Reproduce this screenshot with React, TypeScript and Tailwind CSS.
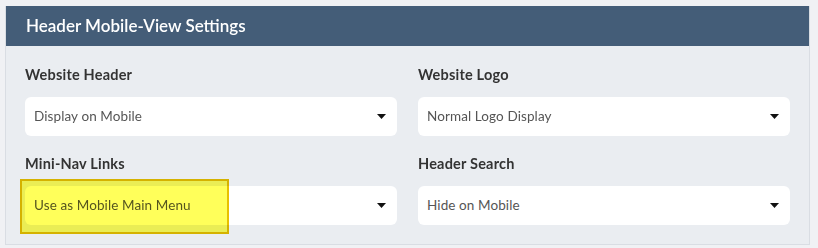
import React from "react";

const Caret = () => (
    <svg width="9" height="5" viewBox="0 0 9 5" className="shrink-0">
        <path d="M0 0 L9 0 L4.5 5 Z" fill="#111" />
    </svg>
);

function Field({ label, value, highlight }: { label: string; value: string; highlight?: boolean }) {
    return (
        <div className="flex flex-col">
            <div className="h-[20px] text-[14.5px] font-bold leading-[20px] tracking-[0.2px] text-[#333]">{label}</div>
            <div className="relative mt-[12px]">
                <div className="flex h-[39px] items-center justify-between rounded-[6px] bg-white pl-[9px] pr-[11px] text-[13.5px] tracking-[0.1px] text-[#555]">
                    <span>{value}</span>
                    <Caret />
                </div>
                {highlight && (
                    <div className="pointer-events-none absolute left-[-5px] top-[-7px] h-[55px] w-[209px] border-2 border-[#e8c000] bg-[#ffff5a] mix-blend-multiply" />
                )}
            </div>
        </div>
    );
}

export default function App() {
    return (
        <div className="min-h-screen bg-[#f0f1f4] pt-[6px] pl-[5px]" style={{ fontFamily: "Lato, 'Noto Sans', sans-serif" }}>
            <div className="w-[805px] border-x border-b border-[#d9dde3] bg-[#eaedf1]">
                {/* Header */}
                <div className="flex h-[40px] items-center bg-[#445d78] px-[20px] text-[17px] font-semibold text-white">
                    Header Mobile-View Settings
                </div>

                {/* Fields */}
                <div className="grid grid-cols-2 gap-x-[21px] gap-y-[18px] px-[19px] pb-[19px] pt-[19px]">
                    <Field label="Website Header" value="Display on Mobile" />
                    <Field label="Website Logo" value="Normal Logo Display" />
                    <Field label="Mini-Nav Links" value="Use as Mobile Main Menu" highlight />
                    <Field label="Header Search" value="Hide on Mobile" />
                </div>
            </div>
        </div>
    );
}
